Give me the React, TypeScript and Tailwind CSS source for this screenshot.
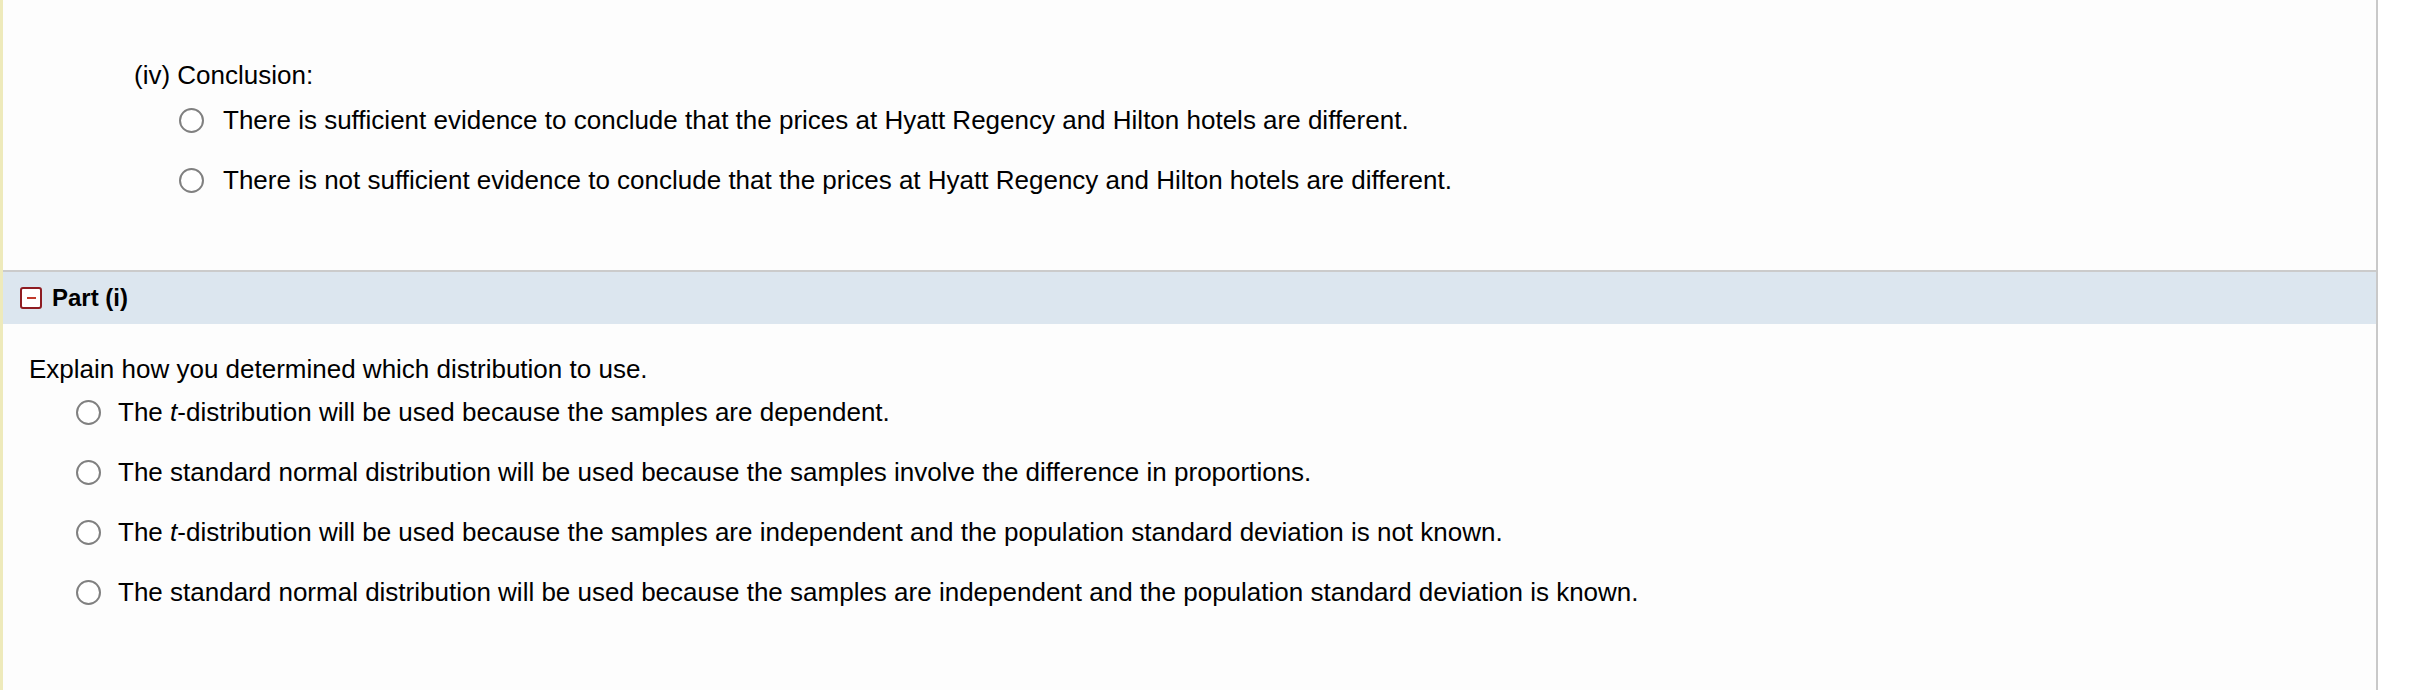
import React from "react";

const font = { fontFamily: '"Liberation Sans", Arial, Helvetica, sans-serif' };

function Radio() {
  return (
    <span className="inline-block w-[25px] h-[25px] rounded-full border-[2px] border-[#808080] bg-white shrink-0" />
  );
}

function Option({ children, gap }: { children: React.ReactNode; gap: string }) {
  return (
    <div className={`flex items-center h-[30px] ${gap}`}>
      <Radio />
      <span className="text-[26px] leading-[30px] text-black whitespace-nowrap">{children}</span>
    </div>
  );
}

function MinusBox() {
  return (
    <span className="flex items-center justify-center w-[22px] h-[22px] rounded-[3px] border-[2px] border-[#8e1c22] bg-white shrink-0">
      <span className="block w-[9px] h-[2px] bg-[#c0392b]" />
    </span>
  );
}

export default function App() {
  return (
    <div className="flex w-[2410px] h-[690px] bg-white overflow-hidden" style={font}>
      <div className="w-[3px] h-full bg-[#eeeabb] shrink-0" />
      <div className="flex flex-col w-[2373px] h-full bg-[#fdfdfd] shrink-0">
        {/* conclusion step */}
        <div className="h-[270px] pl-[131px] pt-[60px]">
          <div className="text-[26px] leading-[30px] text-black">(iv) Conclusion:</div>
          <div className="flex flex-col gap-[30px] mt-[15px] pl-[45px]">
            <Option gap="gap-[19px]">
              There is sufficient evidence to conclude that the prices at Hyatt Regency and Hilton hotels are different.
            </Option>
            <Option gap="gap-[19px]">
              There is not sufficient evidence to conclude that the prices at Hyatt Regency and Hilton hotels are different.
            </Option>
          </div>
        </div>

        {/* part header */}
        <div className="flex items-center gap-[10px] h-[54px] pl-[17px] border-t-[2px] border-[#cbcbcb] bg-[#dce6ef]">
          <MinusBox />
          <span className="text-[24px] leading-[28px] font-bold text-black">Part (i)</span>
        </div>

        {/* part body */}
        <div className="pl-[26px] pt-[30px]">
          <div className="text-[26px] leading-[30px] text-black">Explain how you determined which distribution to use.</div>
          <div className="flex flex-col gap-[30px] mt-[13px] pl-[47px]">
            <Option gap="gap-[17px]">
              The <i>t</i>-distribution will be used because the samples are dependent.
            </Option>
            <Option gap="gap-[17px]">
              The standard normal distribution will be used because the samples involve the difference in proportions.
            </Option>
            <Option gap="gap-[17px]">
              The <i>t</i>-distribution will be used because the samples are independent and the population standard deviation is not known.
            </Option>
            <Option gap="gap-[17px]">
              The standard normal distribution will be used because the samples are independent and the population standard deviation is known.
            </Option>
          </div>
        </div>
      </div>
      <div className="w-[2px] h-full bg-[#c9c9c9] shrink-0" />
      <div className="flex-1 h-full bg-white" />
    </div>
  );
}
